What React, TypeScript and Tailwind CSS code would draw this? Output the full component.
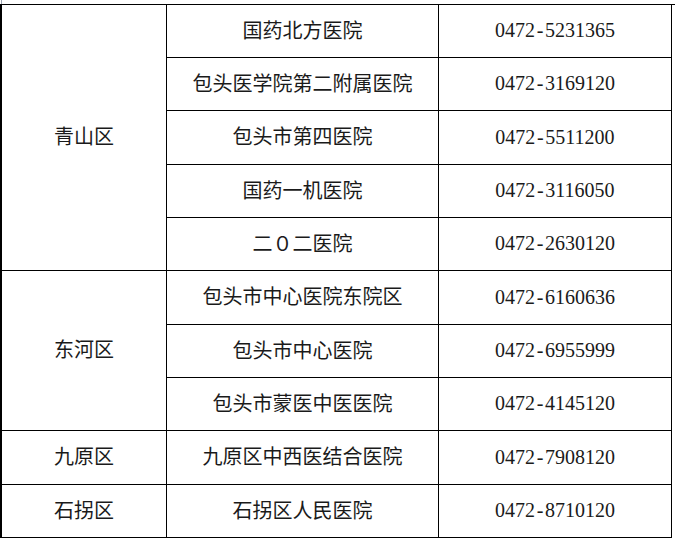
const cjk = "font-['Noto_Sans_CJK_SC',sans-serif]"
const num = "font-['Liberation_Serif','Noto_Sans_CJK_SC',serif]"

const districts = [
  {
    name: '青山区',
    span: 'row-span-5',
    rows: [
      ['国药北方医院', '0472-5231365'],
      ['包头医学院第二附属医院', '0472-3169120'],
      ['包头市第四医院', '0472-5511200'],
      ['国药一机医院', '0472-3116050'],
      ['二０二医院', '0472-2630120'],
    ],
  },
  {
    name: '东河区',
    span: 'row-span-3',
    rows: [
      ['包头市中心医院东院区', '0472-6160636'],
      ['包头市中心医院', '0472-6955999'],
      ['包头市蒙医中医医院', '0472-4145120'],
    ],
  },
  {
    name: '九原区',
    span: 'row-span-1',
    rows: [['九原区中西医结合医院', '0472-7908120']],
  },
  {
    name: '石拐区',
    span: 'row-span-1',
    rows: [['石拐区人民医院', '0472-8710120']],
  },
]

function Phone({ value }: { value: string }) {
  const [area, line] = value.split('-')
  return (
    <span className="flex items-center">
      {area}
      <span className="inline-block w-[10px] text-center">-</span>
      {line}
    </span>
  )
}

export default function App() {
  return (
    <div className="relative w-[675px] h-[539px] bg-white overflow-hidden">
      {/* page corner mark */}
      <div className="absolute left-[1px] top-0 w-px h-[4px] bg-gray-400"></div>
      <div className="pt-1">
        <div
          className={`grid grid-cols-[165px_272px_233px] grid-rows-[53px_53px_54px_53px_53px_54px_53px_53px_54px_53px] border-t border-l-2 border-black text-[20px] text-[#1a1a1a] ${cjk}`}
        >
          {districts.map((d) => (
            <>
              <div
                key={d.name}
                className={`${d.span} col-start-1 flex items-center justify-center pb-[3px] border-r border-b border-black`}
              >
                {d.name}
              </div>
              {d.rows.map(([hospital, phone]) => (
                <>
                  <div
                    key={hospital}
                    className="col-start-2 flex items-center justify-center pb-[3px] border-r border-b border-black"
                  >
                    {hospital}
                  </div>
                  <div
                    key={phone}
                    className={`col-start-3 flex items-center justify-center pb-[2px] border-r border-b border-black ${num}`}
                  >
                    <Phone value={phone} />
                  </div>
                </>
              ))}
            </>
          ))}
        </div>
      </div>
    </div>
  )
}
